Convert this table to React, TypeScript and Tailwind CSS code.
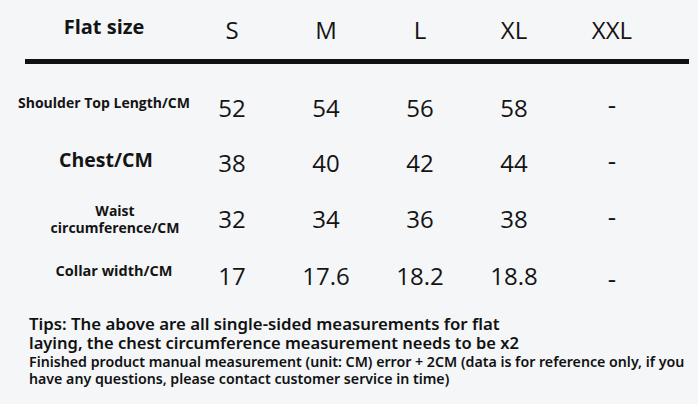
const sizes = ['S', 'M', 'L', 'XL', 'XXL']

const rows = [
  { label: ['Shoulder Top Length/CM'], cls: 'text-[14px] pl-[23px] pb-[9px]', h: 'h-[57px]', dash: 'pb-[6px]', values: ['52', '54', '56', '58'] },
  { label: ['Chest/CM'], cls: 'text-[19.5px] pl-[27px] pb-[6px]', h: 'h-[54px]', dash: 'pb-[6px]', values: ['38', '40', '42', '44'] },
  { label: ['Waist', 'circumference/CM'], cls: 'text-[14px] leading-[17px] pl-[45px]', h: 'h-[58px]', dash: 'pb-[6px]', values: ['32', '34', '36', '38'] },
  { label: ['Collar width/CM'], cls: 'text-[14.5px] pl-[43px] pb-[9px]', h: 'h-[56px]', dash: 'pt-[4px]', values: ['17', '17.6', '18.2', '18.8'] },
]

const grid = 'grid grid-cols-[185px_94px_94px_94px_94px_102px]'

export default function App() {
  return (
    <div className="w-[698px] h-[404px] bg-[#f4f6f8] text-[#141414] font-['Open_Sans','Noto_Sans',sans-serif] overflow-hidden">
      <div className={`${grid} h-[59px] items-center`}>
        <div className="flex justify-center pl-[23px] pb-[6px] text-[20px] font-bold">Flat size</div>
        {sizes.map((s) => (
          <div key={s} className="text-center text-[24px]">
            {s}
          </div>
        ))}
      </div>
      <div className="ml-[25px] w-[664px] h-[5px] bg-[#111]" />
      <div className="pt-[15px]">
        {rows.map((row) => (
          <div key={row.label[0]} className={`${grid} ${row.h} items-center`}>
            <div className={`flex flex-col items-center font-bold text-center leading-tight whitespace-nowrap ${row.cls}`}>
              {row.label.map((l) => (
                <span key={l}>{l}</span>
              ))}
            </div>
            {row.values.map((v) => (
              <div key={v} className="text-center text-[24px]">
                {v}
              </div>
            ))}
            <div className={`text-center text-[26px] ${row.dash}`}>-</div>
          </div>
        ))}
      </div>
      <div className="mt-[10px] pl-[29px] font-['Noto_Sans','Open_Sans',sans-serif] font-semibold text-[#111]">
        <p className="text-[16.8px] leading-[19px]">Tips: The above are all single-sided measurements for flat</p>
        <p className="text-[16.5px] leading-[19px]">laying, the chest circumference measurement needs to be x2</p>
        <p className="mt-[1px] text-[14.2px] leading-[17px]">
          Finished product manual measurement (unit: CM) error + 2CM (data is for reference only, if you
        </p>
        <p className="text-[14.2px] leading-[17px]">have any questions, please contact customer service in time)</p>
      </div>
    </div>
  )
}
